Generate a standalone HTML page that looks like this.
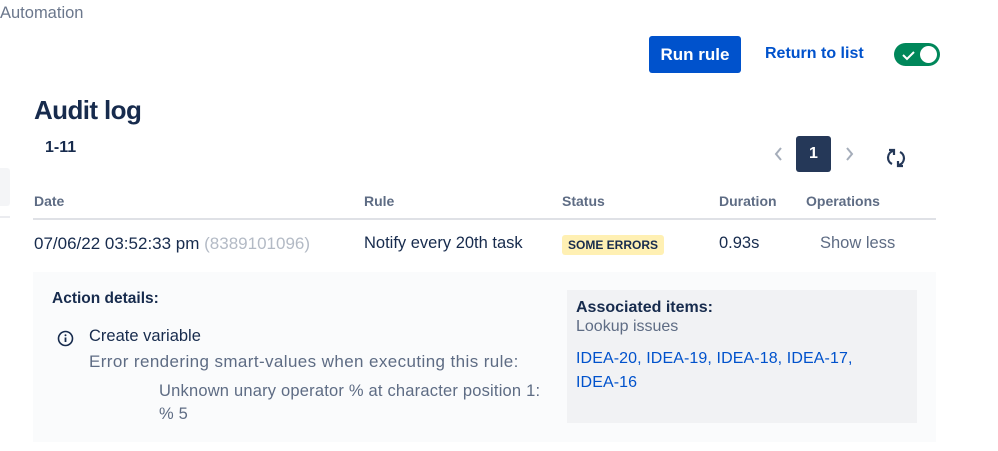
<!DOCTYPE html>
<html><head><meta charset="utf-8"><style>
body{margin:0;width:998px;height:451px;background:#fff;font-family:"Liberation Sans",sans-serif;position:relative;overflow:hidden;color:#172b4d}
.a{position:absolute;white-space:nowrap}
.h{font-size:14px;font-weight:bold;color:#5e6c84}
.t{font-size:16.5px}
</style></head><body>
<div class="a" style="left:0;top:4px;font-size:16.5px;color:#6b778c">Automation</div>
<div class="a" style="left:649px;top:36px;width:92px;height:37px;background:#0052cc;border-radius:3px;color:#fff;font-size:17px;font-weight:bold;text-align:center;line-height:37px">Run rule</div>
<div class="a" style="left:765px;top:45px;color:#0052cc;font-size:16px;font-weight:bold">Return to list</div>
<div class="a" style="left:894px;top:43px;width:46px;height:23px;background:#00875a;border-radius:12px">
<svg width="20" height="20" style="position:absolute;left:5px;top:2px" viewBox="0 0 20 20"><path d="M4 10l4 4 7-7" stroke="#fff" stroke-width="2" fill="none"/></svg>
<div style="position:absolute;right:3px;top:3px;width:17px;height:17px;border-radius:50%;background:#fff"></div></div>
<div class="a" style="left:34px;top:95px;font-size:26px;font-weight:bold;color:#172b4d;letter-spacing:-0.6px">Audit log</div>
<div class="a" style="left:45px;top:139px;font-size:16px;font-weight:bold">1-11</div>
<div class="a" style="left:0;top:168px;width:10px;height:38px;background:#f4f5f7;border-radius:0 3px 3px 0"></div>
<div class="a" style="left:0;top:216px;width:10px;height:2px;background:#ebecf0"></div>
<svg class="a" style="left:770px;top:145px" width="16" height="18"><path d="M11 3l-5 6 5 6" stroke="#a5adba" stroke-width="2" fill="none"/></svg>
<div class="a" style="left:796px;top:136px;width:35px;height:36px;background:#253858;border-radius:3px;color:#fff;font-weight:bold;font-size:16px;text-align:center;line-height:36px">1</div>
<svg class="a" style="left:842px;top:145px" width="16" height="18"><path d="M5 3l5 6-5 6" stroke="#a5adba" stroke-width="2" fill="none"/></svg>
<svg class="a" style="left:884px;top:146px" width="24" height="24" viewBox="0 0 24 24"><path d="M9 5A7 7 0 0 0 8 18M15 19A7 7 0 0 0 16 6" stroke="#253858" stroke-width="2.2" fill="none"/><path d="M5 4h5v5M19 20h-5v-5" stroke="#253858" stroke-width="2.2" fill="none"/></svg>
<div class="a h" style="left:34px;top:193px">Date</div>
<div class="a h" style="left:364px;top:193px">Rule</div>
<div class="a h" style="left:562px;top:193px">Status</div>
<div class="a h" style="left:719px;top:193px">Duration</div>
<div class="a h" style="left:806px;top:193px">Operations</div>
<div class="a" style="left:33px;top:218px;width:903px;height:2px;background:#dfe1e6"></div>
<div class="a" style="left:34px;top:234px;font-size:17px">07/06/22 03:52:33 pm <span style="color:#b3bac5">(8389101096)</span></div>
<div class="a t" style="left:364px;top:234px">Notify every 20th task</div>
<div class="a" style="left:562px;top:235px;padding:0 6px;height:20px;line-height:20px;background:#fff0b3;border-radius:3px;font-size:12px;font-weight:bold;color:#172b4d">SOME ERRORS</div>
<div class="a t" style="left:719px;top:234px">0.93s</div>
<div class="a t" style="left:820px;top:234px;color:#5e6c84">Show less</div>
<div class="a" style="left:33px;top:272px;width:903px;height:170px;background:#fafbfc"></div>
<div class="a" style="left:52px;top:290px;font-size:15.5px;font-weight:bold">Action details:</div>
<svg class="a" style="left:57px;top:330px" width="17" height="17" viewBox="0 0 17 17"><circle cx="8.5" cy="8.5" r="7" stroke="#172b4d" stroke-width="1.6" fill="none"/><circle cx="8.5" cy="5.3" r="1" fill="#172b4d"/><path d="M8.5 7.5v4.5" stroke="#172b4d" stroke-width="1.8"/></svg>
<div class="a" style="left:89px;top:327px;font-size:16.5px">Create variable</div>
<div class="a" style="left:89px;top:352px;font-size:17px;letter-spacing:0.4px;color:#5e6c84">Error rendering smart-values when executing this rule:</div>
<div class="a" style="left:159px;top:380px;font-size:16.5px;letter-spacing:0.2px;color:#5e6c84;line-height:23px">Unknown unary operator % at character position 1:<br>% 5</div>
<div class="a" style="left:567px;top:290px;width:350px;height:133px;background:#f1f2f4"></div>
<div class="a" style="left:576px;top:299px;font-size:16px;font-weight:bold">Associated items:</div>
<div class="a" style="left:576px;top:318px;font-size:16px;color:#5e6c84">Lookup issues</div>
<div class="a" style="left:576px;top:347px;font-size:16px;letter-spacing:0.1px;color:#0052cc;line-height:24px">IDEA-20, IDEA-19, IDEA-18, IDEA-17,<br>IDEA-16</div>
</body></html>
